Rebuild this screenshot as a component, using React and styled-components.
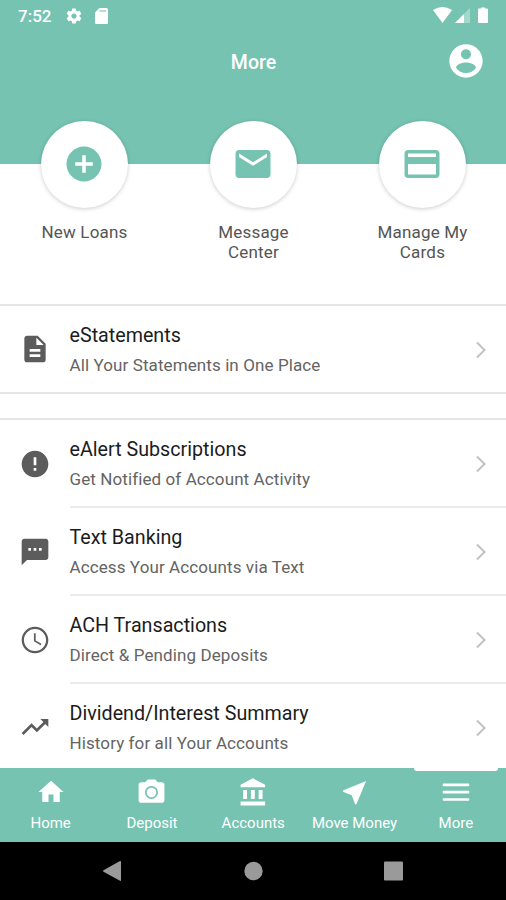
import React from 'react'
import styled, { createGlobalStyle } from 'styled-components'

const icons = {
    settings: 'M19.43 12.98c.04-.32.07-.64.07-.98s-.03-.66-.07-.98l2.11-1.65c.19-.15.24-.42.12-.64l-2-3.46c-.12-.22-.39-.3-.61-.22l-2.49 1c-.52-.4-1.08-.73-1.69-.98l-.38-2.65C14.46 2.18 14.25 2 14 2h-4c-.25 0-.46.18-.49.42l-.38 2.65c-.61.25-1.17.59-1.69.98l-2.49-1c-.23-.09-.49 0-.61.22l-2 3.46c-.13.22-.07.49.12.64l2.11 1.65c-.04.32-.07.65-.07.98s.03.66.07.98l-2.11 1.65c-.19.15-.24.42-.12.64l2 3.46c.12.22.39.3.61.22l2.49-1c.52.4 1.08.73 1.69.98l.38 2.65c.03.24.24.42.49.42h4c.25 0 .46-.18.49-.42l.38-2.65c.61-.25 1.17-.59 1.69-.98l2.49 1c.23.09.49 0 .61-.22l2-3.46c.12-.22.07-.49-.12-.64l-2.11-1.65zM12 15.5c-1.93 0-3.5-1.57-3.5-3.5s1.57-3.5 3.5-3.5 3.5 1.57 3.5 3.5-1.57 3.5-3.5 3.5z',
    account: 'M12 2C6.48 2 2 6.48 2 12s4.48 10 10 10 10-4.48 10-10S17.52 2 12 2zm0 3c1.66 0 3 1.34 3 3s-1.34 3-3 3-3-1.34-3-3 1.34-3 3-3zm0 14.2c-2.5 0-4.71-1.28-6-3.22.03-1.99 4-3.08 6-3.08 1.99 0 5.97 1.09 6 3.08-1.29 1.94-3.5 3.22-6 3.22z',
    add: 'M12 2C6.48 2 2 6.48 2 12s4.48 10 10 10 10-4.48 10-10S17.52 2 12 2zm5 11h-4v4h-2v-4H7v-2h4V7h2v4h4v2z',
    mail: 'M20 4H4c-1.1 0-1.99.9-1.99 2L2 18c0 1.1.9 2 2 2h16c1.1 0 2-.9 2-2V6c0-1.1-.9-2-2-2zm0 4l-8 5-8-5V6l8 5 8-5v2z',
    card: 'M20 4H4c-1.11 0-1.99.89-1.99 2L2 18c0 1.11.89 2 2 2h16c1.11 0 2-.89 2-2V6c0-1.11-.89-2-2-2zm0 14H4v-6h16v6zm0-10H4V6h16v2z',
    description: 'M14 2H6c-1.1 0-1.99.9-1.99 2L4 20c0 1.1.89 2 1.99 2H18c1.1 0 2-.9 2-2V8l-6-6zm2 16H8v-2h8v2zm0-4H8v-2h8v2zm-3-5V3.5L18.5 9H13z',
    error: 'M12 2C6.48 2 2 6.48 2 12s4.48 10 10 10 10-4.48 10-10S17.52 2 12 2zm1 15h-2v-2h2v2zm0-4h-2V7h2v6z',
    sms: 'M20 2H4c-1.1 0-1.99.9-1.99 2L2 22l4-4h14c1.1 0 2-.9 2-2V4c0-1.1-.9-2-2-2zM9 11H7V9h2v2zm4 0h-2V9h2v2zm4 0h-2V9h2v2z',
    clock: 'M11.99 2C6.47 2 2 6.48 2 12s4.47 10 9.99 10C17.52 22 22 17.52 22 12S17.52 2 11.99 2zM12 20.3c-4.580 0-8.300-3.720-8.300-8.300s3.720-8.300 8.300-8.300 8.300 3.720 8.300 8.300-3.720 8.300-8.300 8.300zM12.5 7H11.2v6l5 3 .65-1.1-4.35-2.6z',
    trending: 'M16 6l2.29 2.29-4.88 4.88-4-4L2 16.59 3.41 18l6-6 4 4 6.3-6.29L22 12V6z',
    home: 'M10 20v-6h4v6h5v-8h3L12 3 2 12h3v8z',
    camera: 'M12 8.3a3.7 3.7 0 1 0 0 7.4 3.7 3.7 0 0 0 0-7.4zM9 2L7.17 4H4c-1.1 0-2 .9-2 2v12c0 1.1.9 2 2 2h16c1.1 0 2-.9 2-2V6c0-1.1-.9-2-2-2h-3.17L15 2H9zm3 15c-2.76 0-5-2.24-5-5s2.24-5 5-5 5 2.24 5 5-2.24 5-5 5z',
    bank: 'M4 10v7h3v-7H4zm6 0v7h3v-7h-3zM2 22h19v-3H2v3zm14-12v7h3v-7h-3zm-4.5-9L2 6v2h19V6l-9.500-5z',
    near: 'M21 3L3 10.530v.98l6.840 2.650L12.480 21h.98L21 3z',
    menu: 'M2.700 16.600h18.600q.7 0 .7.700v.6q0 .7-.7.700H2.700q-.7 0-.7-.7v-.6q0-.7.700-.7zM2.700 11.100h18.600q.7 0 .7.700v.6q0 .7-.7.700H2.700q-.7 0-.7-.7v-.6q0-.7.700-.7zM2.700 5.600h18.600q.7 0 .7.700v.6q0 .7-.7.700H2.700q-.7 0-.7-.7v-.6q0-.7.700-.7z'
}

const Icon = ({ name, size }) => (
    <svg width={size} height={size} viewBox='0 0 24 24' fill='currentColor'>
        <path d={icons[name]} fillRule={name === 'camera' ? 'evenodd' : 'nonzero'} />
    </svg>
)

const shortcuts = [
    { icon: 'add', lines: ['New Loans'] },
    { icon: 'mail', lines: ['Message', 'Center'] },
    { icon: 'card', lines: ['Manage My', 'Cards'] }
]

const statements = [
    { icon: 'description', title: 'eStatements', text: 'All Your Statements in One Place' }
]

const services = [
    { icon: 'error', title: 'eAlert Subscriptions', text: 'Get Notified of Account Activity' },
    { icon: 'sms', title: 'Text Banking', text: 'Access Your Accounts via Text' },
    { icon: 'clock', title: 'ACH Transactions', text: 'Direct & Pending Deposits' },
    { icon: 'trending', title: 'Dividend/Interest Summary', text: 'History for all Your Accounts' }
]

const tabs = [
    { icon: 'home', label: 'Home', size: 30 },
    { icon: 'camera', label: 'Deposit', size: 31 },
    { icon: 'bank', label: 'Accounts', size: 31 },
    { icon: 'near', label: 'Move Money', size: 31 },
    { icon: 'menu', label: 'More', size: 32, active: true }
]

const Rows = ({ items }) => items.map(item => (
    <Row key={item.title}>
        <RowIcon><Icon name={item.icon} size={32} /></RowIcon>
        <RowBody>
            <RowText>
                <h2>{item.title}</h2>
                <p>{item.text}</p>
            </RowText>
            <Chevron width='12' height='18' viewBox='0 0 12 18' fill='none' stroke='#c2c2c2' strokeWidth='2'>
                <path d='M2 1.500L9.500 9L2 16.500' />
            </Chevron>
        </RowBody>
    </Row>
))

const App = () => (
    <Screen>
        <GlobalStyle />
        <Header>
            <StatusBar>
                <Time>7:52</Time>
                <Icon name='settings' size={18} />
                <SdCard width='13' height='16' viewBox='0 0 13 16'>
                    <path d='M4.500 0H11.500Q13 0 13 1.500V14.500Q13 16 11.500 16H1.500Q0 16 0 14.500V4.500z' fill='#fff' />
                    <path d='M4.500 3h6.500' stroke='#76c3b1' strokeWidth='1.800' opacity='.6' />
                </SdCard>
                <Signals width='58' height='18' viewBox='0 0 58 18' fill='#fff'>
                    <path d='M0 3Q9.500-3 19 3L9.500 16z' />
                    <path d='M37 1V16H22z' opacity='.35' />
                    <path d='M31 7V16H22z' />
                    <path d='M48 1.500V.5h4v1h2q1 0 1 1V15q0 1-1 1h-8q-1 0-1-1V2.500q0-1 1-1z' />
                </Signals>
            </StatusBar>
            <TitleBar>
                <span />
                <h1>More</h1>
                <Icon name='account' size={40} />
            </TitleBar>
        </Header>
        <Shortcuts>
            {shortcuts.map(item => (
                <Shortcut key={item.icon}>
                    <Circle><Icon name={item.icon} size={42} /></Circle>
                    {item.lines.map(line => <span key={line}>{line}</span>)}
                </Shortcut>
            ))}
        </Shortcuts>
        <Group $closed><Rows items={statements} /></Group>
        <Group><Rows items={services} /></Group>
        <TabBar>
            {tabs.map(tab => (
                <Tab key={tab.label} $active={tab.active}>
                    <TabIcon><Icon name={tab.icon} size={tab.size} /></TabIcon>
                    <span>{tab.label}</span>
                </Tab>
            ))}
        </TabBar>
        <SystemBar>
            <svg width='506' height='58' viewBox='0 0 506 58' fill='#9a9a9a'>
                <path d='M103.500 28.200L120 19Q121 18.600 121 20V38Q121 39.300 120 38.800L103.500 29.800Q102.500 29 103.500 28.200z' />
                <circle cx='253.500' cy='29' r='9.200' />
                <rect x='384' y='19.500' width='19' height='19' rx='1' />
            </svg>
        </SystemBar>
    </Screen>
)

const GlobalStyle = createGlobalStyle`
    * {
        box-sizing: border-box;
    }
    body {
        margin: 0;
        background: #fff;
        font-family: Roboto, 'Liberation Sans', sans-serif;
    }
    h1, h2, p {
        margin: 0;
        font-weight: 400;
    }
    svg {
        display: block;
        flex: none;
    }
`

const Screen = styled.div`
    display: flex;
    flex-direction: column;
    width: 506px;
    height: 900px;
    overflow: hidden;
    background: #fff;
`

const Header = styled.header`
    flex: none;
    height: 164px;
    background: #76c3b1;
    color: #fff;
`

const StatusBar = styled.div`
    display: flex;
    align-items: center;
    height: 31px;
    padding: 0 15px 0 18px;
`

const Time = styled.span`
    width: 47px;
    font-size: 17px;
    font-weight: 500;
`

const SdCard = styled.svg`
    margin-left: 12px;
`

const Signals = styled.svg`
    margin-left: auto;
`

const TitleBar = styled.div`
    display: grid;
    grid-template-columns: 40px 1fr 40px;
    align-items: center;
    height: 60px;
    padding: 0 20px;
    text-align: center;
    h1 {
        padding: 2px 0 0 1px;
        font-size: 19.5px;
        font-weight: 500;
    }
`

const Shortcuts = styled.div`
    display: grid;
    grid-template-columns: repeat(3, 169px);
    flex: none;
    height: 183px;
    margin-top: -43px;
`

const Shortcut = styled.div`
    display: flex;
    flex-direction: column;
    align-items: center;
    color: #555;
    font-size: 17px;
    line-height: 20px;
    letter-spacing: 0.2px;
`

const Circle = styled.div`
    display: flex;
    align-items: center;
    justify-content: center;
    width: 87px;
    height: 87px;
    margin-bottom: 14px;
    padding: 0 1px 1px 0;
    border-radius: 50%;
    background: #fff;
    color: #76c3b1;
    box-shadow: 0 1px 4px rgba(0, 0, 0, 0.2);
`

const Group = styled.section`
    flex: none;
    margin-bottom: ${props => props.$closed ? '24px' : '0'};
    border-top: 2px solid #e6e6e6;
    border-bottom: ${props => props.$closed ? '2px solid #e6e6e6' : 'none'};
`

const Row = styled.div`
    display: flex;
    height: 88px;
    ${Group} > &:only-child {
        height: 86px;
    }
    ${Group} > &:last-child:not(:only-child) {
        height: 86px;
    }
`

const RowIcon = styled.div`
    display: flex;
    align-items: center;
    flex: none;
    width: 69.5px;
    padding-left: 19px;
    color: #5c5c5c;
`

const RowBody = styled.div`
    display: flex;
    align-items: center;
    justify-content: space-between;
    flex: 1;
    padding-right: 19px;
    border-bottom: 2px solid #ebebeb;
    ${Row}:last-child & {
        border-bottom: none;
    }
`

const RowText = styled.div`
    h2 {
        color: #1c1c1c;
        font-size: 19.7px;
        line-height: 28px;
    }
    p {
        margin-top: 4px;
        color: #646464;
        font-size: 17px;
        line-height: 22px;
        letter-spacing: 0.1px;
    }
`

const Chevron = styled.svg`
    margin-top: 2px;
`

const TabBar = styled.nav`
    display: grid;
    grid-template-columns: repeat(5, 101.3px);
    flex: none;
    height: 74px;
    margin-top: -2px;
    background: #76c3b1;
    color: #fff;
`

const Tab = styled.div`
    display: flex;
    flex-direction: column;
    align-items: center;
    font-size: 15px;
    line-height: 18px;
    white-space: nowrap;
    &::before {
        content: '';
        width: 84px;
        height: 3px;
        border-radius: 0 0 3px 3px;
        background: ${props => props.$active ? '#fff' : 'transparent'};
    }
`

const TabIcon = styled.div`
    display: flex;
    align-items: center;
    height: 32px;
    margin: 5px 0 6px;
`

const SystemBar = styled.footer`
    flex: none;
    height: 58px;
    background: #000;
`

export default App
